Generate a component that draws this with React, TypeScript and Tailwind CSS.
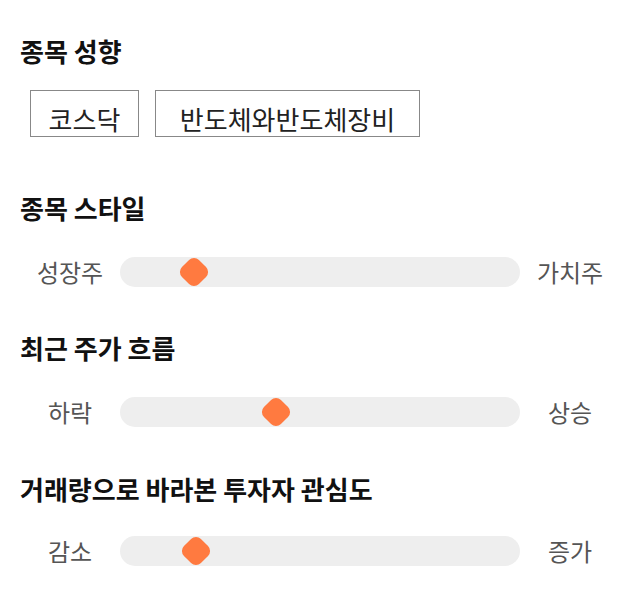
import React from 'react';

const font = { fontFamily: '"Noto Sans CJK KR", "Noto Sans", sans-serif' };

interface SliderProps {
  left: string;
  right: string;
  pos: number; // thumb centre, px from track start
}

function StyleSlider({ left, right, pos }: SliderProps) {
  return (
    <div className="flex items-center h-[30px]">
      <div className="w-[100px] text-center text-[24px] leading-[30px] text-[#555]">{left}</div>
      <div className="relative w-[400px] h-[30px] rounded-full bg-[#eeeeee]">
        <div
          className="absolute top-1/2 w-[24px] h-[24px] -translate-x-1/2 -translate-y-1/2 rotate-45 rounded-[7px] bg-[#ff7a40]"
          style={{ left: pos }}
        />
      </div>
      <div className="w-[100px] text-center text-[24px] leading-[30px] text-[#555]">{right}</div>
    </div>
  );
}

function Heading({ children, className = '' }: { children: React.ReactNode; className?: string }) {
  return <h2 className={`text-[26px] font-bold leading-[32px] text-[#111] ${className}`}>{children}</h2>;
}

export default function App() {
  const chips = [
    { label: '코스닥', width: 'w-[109px]' },
    { label: '반도체와반도체장비', width: 'w-[265px]' },
  ];

  return (
    <div className="w-[640px] min-h-[606px] bg-white px-5 pt-[35px]" style={font}>
      <Heading>종목 성향</Heading>
      <div className="flex gap-4 mt-[23px] ml-[10px]">
        {chips.map((c) => (
          <div
            key={c.label}
            className={`${c.width} h-[47px] pt-[10px] flex items-center justify-center border border-[#888] text-[26px] text-[#222]`}
          >
            {c.label}
          </div>
        ))}
      </div>

      <Heading className="mt-[55px]">종목 스타일</Heading>
      <div className="mt-[33px]">
        <StyleSlider left="성장주" right="가치주" pos={74} />
      </div>

      <Heading className="mt-[45px]">최근 주가 흐름</Heading>
      <div className="mt-[33px]">
        <StyleSlider left="하락" right="상승" pos={156} />
      </div>

      <Heading className="mt-[46px]">거래량으로 바라본 투자자 관심도</Heading>
      <div className="mt-[31px]">
        <StyleSlider left="감소" right="증가" pos={76} />
      </div>
    </div>
  );
}
